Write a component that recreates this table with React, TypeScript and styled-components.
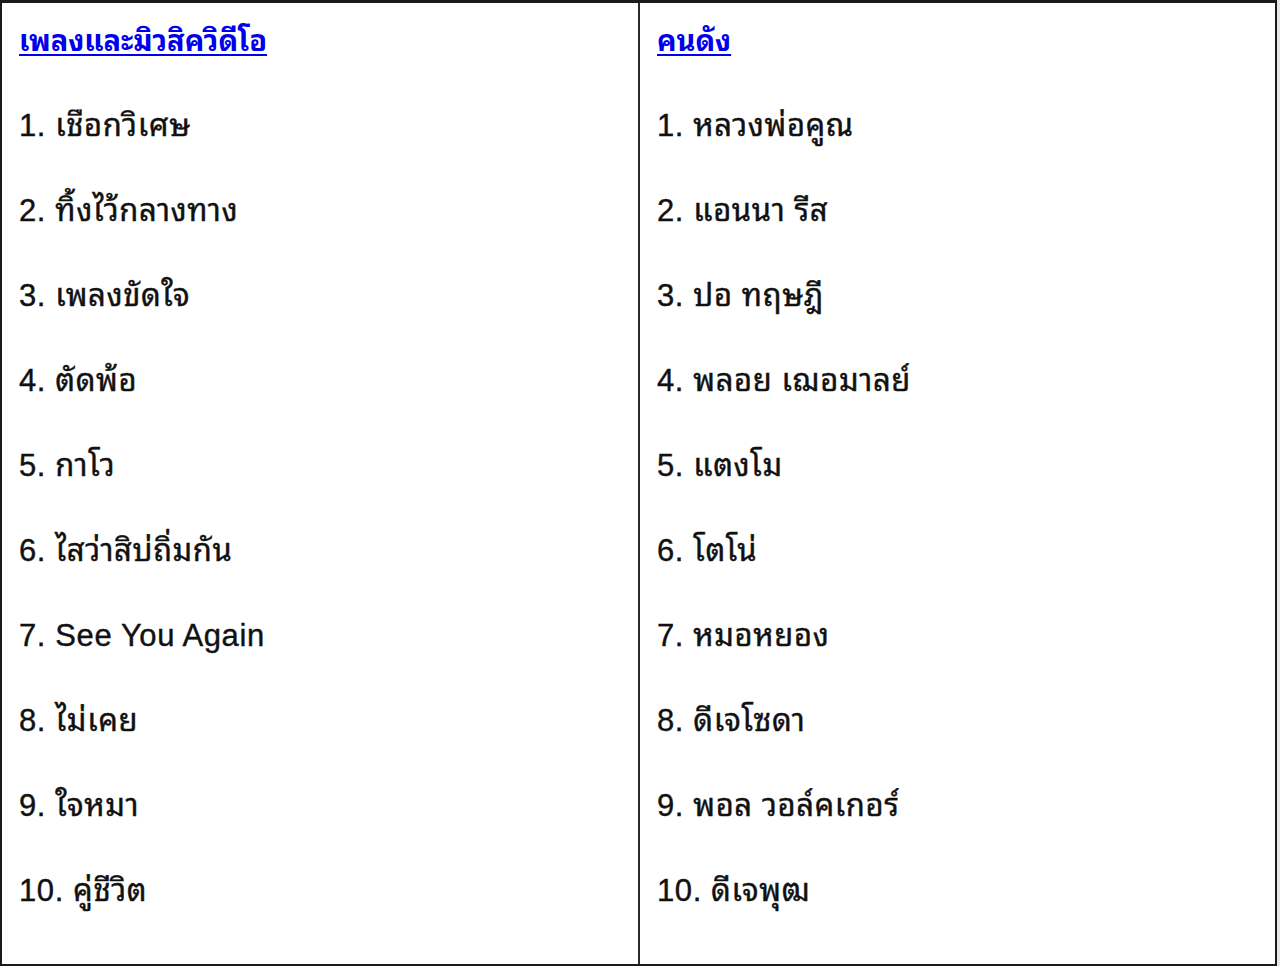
import styled, { createGlobalStyle } from 'styled-components'

const GlobalStyle = createGlobalStyle`
  html, body {
    margin: 0;
    padding: 0;
    background: #e6e6e6;
  }
  body {
    font-family: "Liberation Sans", "Noto Sans Thai Looped", "Noto Looped Thai", Loma, Garuda, Waree, Kinnari, "Noto Sans Thai", sans-serif;
  }
`

const Table = styled.div`
  width: 1277px;
  height: 966px;
  box-sizing: border-box;
  display: grid;
  grid-template-columns: 638px 1fr;
  background: #ffffff;
  border: 2px solid #1a1a1a;
  border-top-width: 3px;
`

const Column = styled.div<{ $divider?: boolean }>`
  display: flex;
  flex-direction: column;
  padding-top: 1px;
  padding-left: 17px;
  border-right: ${p => (p.$divider ? '2px solid #2a2a2a' : 'none')};
`

const Heading = styled.a`
  align-self: flex-start;
  line-height: 74px;
  margin-bottom: 5px;
  font-size: 29px;
  font-weight: bold;
  color: #0000ee;
  text-decoration: underline;
  text-underline-offset: 3px;
`

const Item = styled.div`
  line-height: 85px;
  font-size: 31px;
  letter-spacing: 0.6px;
  color: #111111;
  -webkit-text-stroke: 0.4px #111111;
`

const songs = [
  'เชือกวิเศษ',
  'ทิ้งไว้กลางทาง',
  'เพลงขัดใจ',
  'ตัดพ้อ',
  'กาโว',
  'ไสว่าสิบ่ถิ่มกัน',
  'See You Again',
  'ไม่เคย',
  'ใจหมา',
  'คู่ชีวิต',
]

const celebs = [
  'หลวงพ่อคูณ',
  'แอนนา รีส',
  'ปอ ทฤษฎี',
  'พลอย เฌอมาลย์',
  'แตงโม',
  'โตโน่',
  'หมอหยอง',
  'ดีเจโซดา',
  'พอล วอล์คเกอร์',
  'ดีเจพุฒ',
]

export default function App() {
  return (
    <>
      <GlobalStyle />
      <Table>
        <Column $divider>
          <Heading href="#">เพลงและมิวสิควิดีโอ</Heading>
          {songs.map((s, i) => (
            <Item key={s}>{`${i + 1}. ${s}`}</Item>
          ))}
        </Column>
        <Column>
          <Heading href="#">คนดัง</Heading>
          {celebs.map((s, i) => (
            <Item key={s}>{`${i + 1}. ${s}`}</Item>
          ))}
        </Column>
      </Table>
    </>
  )
}
